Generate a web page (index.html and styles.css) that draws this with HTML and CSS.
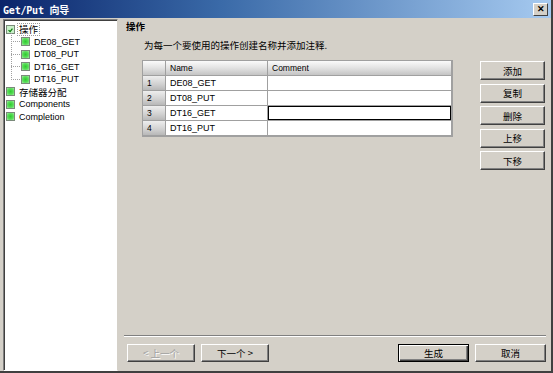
FILE: index.html
```html
<!DOCTYPE html>
<html>
<head>
<meta charset="utf-8">
<link rel="stylesheet" href="styles.css">
</head>
<body>
<div class="window">
  <div class="titlebar">
    <span class="title">Get/Put 向导</span>
    <span class="close">✕</span>
  </div>
  <div class="main">
    <div class="tree">
      <div class="node root"><span class="box checked"><svg width="9" height="9" viewBox="0 0 9 9"><path d="M2 4 L4 6 L7 2" stroke="#0a7a0a" stroke-width="1.6" fill="none"/></svg></span><span class="label cjk sel">操作</span></div>
      <div class="children">
        <div class="node child"><span class="hline"></span><span class="box"></span><span class="label">DE08_GET</span></div>
        <div class="node child"><span class="hline"></span><span class="box"></span><span class="label">DT08_PUT</span></div>
        <div class="node child"><span class="hline"></span><span class="box"></span><span class="label">DT16_GET</span></div>
        <div class="node child last"><span class="hline"></span><span class="box"></span><span class="label">DT16_PUT</span></div>
      </div>
      <div class="node root"><span class="box"></span><span class="label cjk">存储器分配</span></div>
      <div class="node root"><span class="box"></span><span class="label">Components</span></div>
      <div class="node root"><span class="box"></span><span class="label">Completion</span></div>
    </div>
    <div class="panel">
      <div class="heading cjk">操作</div>
      <div class="desc cjk">为每一个要使用的操作创建名称并添加注释.</div>
      <div class="content">
        <div class="grid">
          <div class="hdr corner"></div><div class="hdr">Name</div><div class="hdr">Comment</div>
          <div class="rh">1</div><div class="cell">DE08_GET</div><div class="cell"></div>
          <div class="rh">2</div><div class="cell">DT08_PUT</div><div class="cell"></div>
          <div class="rh">3</div><div class="cell">DT16_GET</div><div class="cell focus"></div>
          <div class="rh">4</div><div class="cell">DT16_PUT</div><div class="cell"></div>
        </div>
        <div class="side">
          <div class="btn cjk">添加</div>
          <div class="btn cjk">复制</div>
          <div class="btn cjk">删除</div>
          <div class="btn cjk">上移</div>
          <div class="btn cjk">下移</div>
        </div>
      </div>
      <div class="footer">
        <div class="btn wide disabled cjk">&lt; 上一个</div>
        <div class="btn wide cjk">下一个 &gt;</div>
        <div class="spacer"></div>
        <div class="btn wide2 default cjk">生成</div>
        <div class="btn wide2 cjk">取消</div>
      </div>
    </div>
  </div>
</div>
</body>
</html>
```

FILE: styles.css
```css
html, body {
  margin: 0;
  padding: 0;
  background: #d4d0c8;
}
body {
  font-family: "Liberation Sans", "Noto Sans CJK SC", sans-serif;
  font-size: 9px;
  color: #000;
}
.cjk {
  font-family: "Noto Sans CJK SC", "Liberation Sans", sans-serif;
  font-size: 9.5px;
}
.window {
  width: 553px;
  height: 373px;
  box-sizing: border-box;
  border-right: 2px solid #404040;
  border-bottom: 2px solid #404040;
  display: flex;
  flex-direction: column;
  background: #d4d0c8;
}
.titlebar {
  height: 18px;
  flex: none;
  background: linear-gradient(to right, #0a246a 0%, #3a6aa8 40%, #a6caf0 100%);
  display: flex;
  align-items: center;
  justify-content: space-between;
  padding: 0 3px 0 3px;
  box-sizing: border-box;
}
.title {
  color: #fff;
  font-family: "DejaVu Sans Mono", "Noto Sans CJK SC", monospace;
  font-weight: bold;
  font-size: 10px;
  letter-spacing: -0.2px;
}
.close {
  width: 15px;
  height: 13px;
  box-sizing: border-box;
  background: #d4d0c8;
  border: 1px solid;
  border-color: #fff #404040 #404040 #fff;
  font-size: 9px;
  font-weight: bold;
  line-height: 11px;
  text-align: center;
  color: #000;
}
.main {
  flex: 1;
  display: flex;
  padding: 1px 0 0 3px;
}
.tree {
  width: 115px;
  flex: none;
  box-sizing: border-box;
  background: #fff;
  border: 1px solid;
  border-color: #808080 #d4d0c8 #fff #808080;
  box-shadow: inset 1px 1px 0 #404040;
  padding: 3px 0 0 2px;
}
.node {
  height: 12.5px;
  display: flex;
  align-items: center;
  position: relative;
}
.box {
  width: 9px;
  height: 9px;
  box-sizing: border-box;
  border: 1px solid #7a8a7a;
  background: radial-gradient(circle, #2ecc2e 0%, #58dc58 55%, #a8eca8 100%);
  flex: none;
  display: flex;
}
.box.checked {
  background: #c8f0c8;
}
.label {
  margin-left: 4px;
  white-space: nowrap;
}
.label.sel {
  border: 1px dotted #9a9a9a;
  padding: 0 1px;
  margin-left: 2px;
  line-height: 11px;
}
.children {
  position: relative;
  margin-left: 5px;
}
.children::before {
  content: "";
  position: absolute;
  left: 0;
  top: -3px;
  height: 47px;
  border-left: 1px dotted #a0a0a0;
}
.hline {
  width: 9px;
  border-top: 1px dotted #a0a0a0;
  margin-right: 1px;
}
.panel {
  flex: 1;
  display: flex;
  flex-direction: column;
  padding: 0 5px 0 8px;
}
.heading {
  font-weight: bold;
  height: 14px;
  line-height: 14px;
}
.desc {
  margin: 5px 0 0 18px;
  height: 15px;
  line-height: 15px;
}
.content {
  display: flex;
  margin-top: 7px;
  margin-left: 16px;
  flex: 1;
}
.grid {
  display: grid;
  grid-template-columns: 23px 102px 184px;
  grid-auto-rows: 15px;
  align-self: flex-start;
  border: 1px solid #a0a0a0;
  background: #a0a0a0;
}
.hdr, .rh, .cell {
  box-sizing: border-box;
  border-right: 1px solid #a0a0a0;
  border-bottom: 1px solid #a0a0a0;
  padding-left: 4px;
  line-height: 14px;
  white-space: nowrap;
}
.hdr {
  background: linear-gradient(to bottom, #fbfbfb 0%, #e2e2e2 50%, #c4c4c4 100%);
  font-size: 8.5px;
}
.rh {
  background: linear-gradient(to bottom, #eeeeee 0%, #d0d0d0 60%, #b8b8b8 100%);
  font-size: 8.5px;
}
.cell {
  background: #fff;
}
.cell.focus {
  box-shadow: inset 0 0 0 1px #000;
}
.side {
  margin-left: 27px;
  margin-top: 1px;
  display: flex;
  flex-direction: column;
  gap: 3.5px;
}
.btn {
  width: 65px;
  height: 19px;
  box-sizing: border-box;
  background: #d4d0c8;
  border: 1px solid;
  border-color: #fff #404040 #404040 #fff;
  box-shadow: inset -1px -1px 0 #808080;
  display: flex;
  align-items: center;
  justify-content: center;
  white-space: nowrap;
}
.footer {
  flex: none;
  display: flex;
  align-items: flex-start;
  gap: 6px;
  border-top: 1px solid #808080;
  box-shadow: inset 0 1px 0 #fff;
  margin: 0 0 0 -2px;
  padding: 8px 0 9px 3px;
}
.btn.wide {
  width: 68px;
  height: 18px;
}
.btn.wide2 {
  width: 71px;
  height: 18px;
}
.btn.disabled {
  color: #a0a0a0;
  text-shadow: 1px 1px 0 #fff;
}
.btn.default {
  border: 1px solid #000;
  box-shadow: inset 1px 1px 0 #fff, inset -1px -1px 0 #404040, inset -2px -2px 0 #808080;
}
.spacer {
  flex: 1;
}
```
